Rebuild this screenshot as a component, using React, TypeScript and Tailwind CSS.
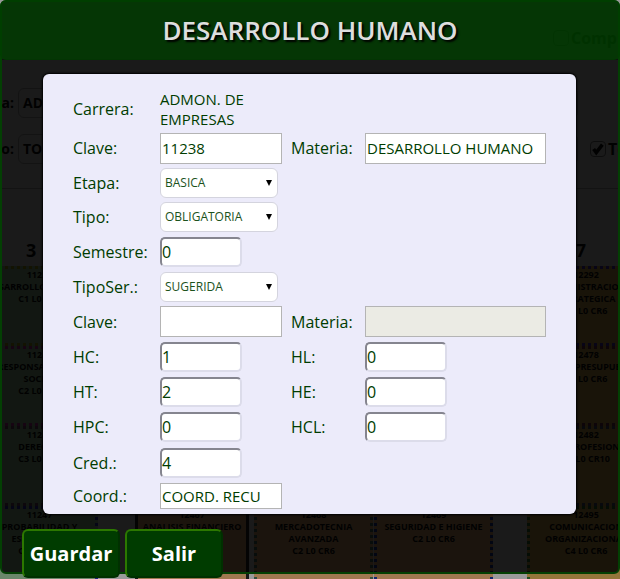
import React, { useState } from "react";

type Course = { code?: string; lines?: string[]; load?: string; tone: string };

const PEACH = "bg-[#a07850] border-[#181818]";
const TEAL = "bg-[#a07850] border-[#305040]";
const BLUE = "bg-[#a07850] border-[#102870]";

const columns: { width: string; courses: Course[] }[] = [
  {
    width: "w-[117px] -ml-[19px]",
    courses: [
      { code: "11236", lines: ["DESARROLLO HUMANO"], load: "C1 L0 CR6", tone: "bg-[#6a876a] border-[#6f6f10]" },
      { code: "11241", lines: ["RESPONSABILIDAD", "SOCIAL"], load: "C2 L0 CR6", tone: "bg-[#6a876a] border-[#80206a]" },
      { code: "11245", lines: ["DERECHO"], load: "C3 L0 CR6", tone: "bg-[#6a876a] border-[#50304a]" },
      { code: "11247", lines: ["PROBABILIDAD Y", "ESTADISTICA"], load: "C2 L2 CR6", tone: "bg-[#6a876a] border-[#202080]" },
    ],
  },
  {
    width: "w-[114px] ml-[37px]",
    courses: [
      { tone: PEACH },
      { tone: PEACH },
      { tone: PEACH },
      { code: "12467", lines: ["ANALISIS FINANCIERO"], tone: "bg-[#a07850] border-[#181818] !border-solid rounded-md" },
    ],
  },
  {
    width: "w-[119px] ml-[5px]",
    courses: [
      { tone: TEAL },
      { tone: TEAL },
      { tone: TEAL },
      { code: "12468", lines: ["MERCADOTECNIA", "AVANZADA"], load: "C2 L0 CR6", tone: TEAL },
    ],
  },
  {
    width: "w-[119px] ml-px",
    courses: [
      { tone: BLUE },
      { tone: BLUE },
      { tone: BLUE },
      { code: "12469", lines: ["SEGURIDAD E HIGIENE"], load: "C2 L0 CR6", tone: BLUE },
    ],
  },
  {
    width: "w-[118px] ml-[34px]",
    courses: [
      { code: "12292", lines: ["ADMINISTRACION", "ESTRATEGICA"], load: "C2 L0 CR6", tone: "bg-[#94763a] border-[#302080]" },
      { code: "12478", lines: ["ADMON. PRESUPUESTO"], load: "C2 L0 CR6", tone: "bg-[#94763a] border-[#50203a]" },
      { code: "12482", lines: ["ETICA PROFESIONAL"], load: "C2 L0 CR10", tone: "bg-[#94763a] border-[#303850]" },
      { code: "12495", lines: ["COMUNICACION", "ORGANIZACIONAL"], load: "C4 L0 CR6", tone: "bg-[#94763a] border-[#205020]" },
    ],
  },
];

function Backdrop() {
  return (
    <div aria-hidden="true" className="absolute inset-0 overflow-hidden bg-[#9a9a9a] text-[#080808]">
      <div className="flex h-[60px] items-center justify-end border-b border-[#606060] pt-4">
        <span className="flex w-[67px] items-center gap-[2px] text-base font-bold">
          <span className="h-4 w-4 shrink-0 rounded-sm border border-[#505050]" />Completo
        </span>
      </div>
      <div className="flex h-[129px] flex-col justify-center gap-4 border-b border-[#707070] pt-1 text-sm font-bold">
        <div className="flex items-center gap-1">
          <span className="w-[14px] shrink-0 text-right">a:</span>
          <span className="flex h-[30px] w-[560px] shrink-0 items-center rounded-md border border-[#707070] px-1">ADMON.</span>
        </div>
        <div className="flex items-center gap-1">
          <span className="w-[14px] shrink-0 text-right">o:</span>
          <span className="flex h-[30px] w-[560px] shrink-0 items-center rounded-md border border-[#707070] px-1">TODAS</span>
          <span className="ml-2 flex shrink-0 items-center gap-[2px] text-base leading-4">
            <span className="flex h-4 w-4 items-center justify-center rounded-sm border border-[#505050]">
              <svg viewBox="0 0 16 16" className="h-4 w-4" fill="none" stroke="currentColor" strokeWidth="4"><path d="m3 8 3 4 7-9" /></svg>
            </span>
            Todas
          </span>
        </div>
      </div>
      <div className="flex h-[77px] items-end justify-between pb-1 pl-[26px] pr-[34px] text-lg font-bold leading-6">
        <span>3</span><span>7</span>
      </div>
      <div className="flex">
        {columns.map((column, i) => (
          <div key={i} className={"flex shrink-0 flex-col " + column.width}>
            {column.courses.map((course, j) => (
              <div key={j} className={"h-20 border-3 border-dotted text-center text-[9px] font-bold leading-3 whitespace-nowrap " + course.tone}>
                {course.code && <div>{course.code}</div>}
                {course.lines?.map((line) => <div key={line} className="flex justify-center">{line}</div>)}
                {course.load && <div>{course.load}</div>}
              </div>
            ))}
          </div>
        ))}
      </div>
    </div>
  );
}

const plain = "block border border-[#b4b4b4] px-px text-[15px] text-[#003c00] outline-none";
const numeric = "block h-[30px] w-[82px] rounded-[5px] border-2 border-t-[#85858f] border-l-[#85858f] border-r-[#dcdcea] border-b-[#dcdcea] bg-white text-base text-[#003c00] outline-none";

type Kind = "number" | "text" | "short" | "disabled";

function Field({ id, label, value, kind = "number", wide = false }: { id: string; label: string; value: string; kind?: Kind; wide?: boolean }) {
  const [text, setText] = useState(value);
  const look =
    kind === "number"
      ? numeric
      : plain +
        (kind === "short" ? " h-[26px] pr-4" : " h-[31px]") +
        (wide ? " w-[181px]" : " w-[122px]") +
        (kind === "disabled" ? " bg-[#ebebe4]" : " bg-white");
  return (
    <>
      <label htmlFor={id}>{label}</label>
      <input id={id} className={look} value={text} disabled={kind === "disabled"} onChange={(e) => setText(e.target.value)} />
    </>
  );
}

function Choice({ id, label, value }: { id: string; label: string; value: string }) {
  return (
    <>
      <label htmlFor={id}>{label}</label>
      <div className="relative w-[118px]">
        <select id={id} defaultValue={value} className="block h-[30px] w-full appearance-none rounded-md border border-[#d4d4de] bg-white pl-1 text-xs text-[#1c521c] outline-none">
          <option>{value}</option>
        </select>
        <svg aria-hidden="true" viewBox="0 0 6 6" className="pointer-events-none absolute right-[6px] top-3 h-[6px] w-[6px]"><path d="M0 0h6L3 6z" fill="#000" /></svg>
      </div>
    </>
  );
}

const row = "grid grid-cols-[87px_131px_74px_181px] items-center";
const action = "h-[49px] w-[98px] rounded-md border-2 border-[#003000] border-t-[#2c7800] border-l-[#2c7800] bg-[#003c00] text-xl font-bold text-white";

export default function App() {
  return (
    <div className="relative h-screen overflow-hidden font-['Trebuchet_MS','Open_Sans',sans-serif]">
      <Backdrop />
      <main role="dialog" aria-labelledby="title" className="relative flex h-full flex-col">
        <div className="absolute inset-x-0 top-0 bottom-[5px] rounded-md border-2 border-[#034003] bg-black/83" />
        <header className="relative flex h-[60px] shrink-0 items-center justify-center rounded-md bg-[#003d00]/80">
          <h1 id="title" className="text-[26px] font-semibold text-[#dedede] [text-shadow:2px_2px_2px_#000]">DESARROLLO HUMANO</h1>
        </header>
        <form className="relative mt-[14px] mr-11 ml-[43px] flex h-[440px] shrink-0 flex-col rounded-md bg-[#ecebfa] pt-3 pl-[30px] text-base text-[#003c00] shadow-[0_0_2px_1px_#000]" onSubmit={(e) => e.preventDefault()}>
          <div className={row + " h-[45px]"}>
            <span>Carrera:</span><span className="text-[15px] leading-5">ADMON. DE EMPRESAS</span>
          </div>
          <div className={row + " h-[34px]"}>
            <Field id="clave" label="Clave:" value="11238" kind="text" />
            <Field id="materia" label="Materia:" value="DESARROLLO HUMANO" kind="text" wide />
          </div>
          <div className={row + " h-[35px]"}><Choice id="etapa" label="Etapa:" value="BASICA" /></div>
          <div className={row + " h-[34px]"}><Choice id="tipo" label="Tipo:" value="OBLIGATORIA" /></div>
          <div className={row + " h-[35px]"}><Field id="semestre" label="Semestre:" value="0" /></div>
          <div className={row + " h-[35px]"}><Choice id="tiposer" label="TipoSer.:" value="SUGERIDA" /></div>
          <div className={row + " h-[35px]"}>
            <Field id="clave2" label="Clave:" value="" kind="text" />
            <Field id="materia2" label="Materia:" value="" kind="disabled" wide />
          </div>
          <div className={row + " h-[35px]"}><Field id="hc" label="HC:" value="1" /><Field id="hl" label="HL:" value="0" /></div>
          <div className={row + " h-[35px]"}><Field id="ht" label="HT:" value="2" /><Field id="he" label="HE:" value="0" /></div>
          <div className={row + " h-9"}><Field id="hpc" label="HPC:" value="0" /><Field id="hcl" label="HCL:" value="0" /></div>
          <div className={row + " h-[35px]"}><Field id="cred" label="Cred.:" value="4" /></div>
          <div className={row + " h-8"}><Field id="coord" label="Coord.:" value="COORD. RECU" kind="short" /></div>
        </form>
        <div className="relative mt-[15px] flex gap-[5px] pl-[22px]">
          <button type="button" className={action}>Guardar</button>
          <button type="button" className={action}>Salir</button>
        </div>
      </main>
    </div>
  );
}
